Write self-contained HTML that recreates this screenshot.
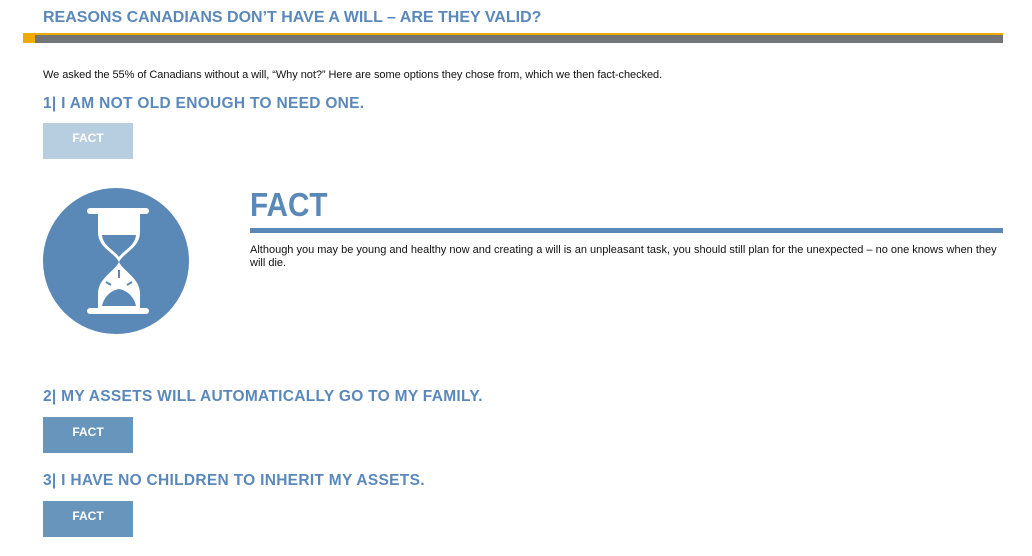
<!DOCTYPE html>
<html><head><meta charset="utf-8"><style>
*{margin:0;padding:0;box-sizing:border-box}
body{width:1032px;height:556px;background:#fff;font-family:"Liberation Sans",Arial,sans-serif;position:relative;overflow:hidden}
.a{position:absolute;white-space:nowrap}
.h{color:#5b88bb;font-weight:bold;letter-spacing:0.2px}
.btn{position:absolute;left:43px;width:90px;height:36px;color:#fff;font-weight:bold;font-size:12px;text-align:center;line-height:31px}
.p{font-size:11px;color:#111}
</style></head><body>
<div class="a h" style="left:43px;top:9px;font-size:16px;letter-spacing:0">REASONS CANADIANS DON’T HAVE A WILL – ARE THEY VALID?</div>
<div class="a" style="left:23px;top:33px;width:980px;height:2px;background:#f0ab00"></div>
<div class="a" style="left:35px;top:35px;width:968px;height:8px;background:#737477"></div>
<div class="a" style="left:23px;top:33px;width:12px;height:10px;background:#f0ab00"></div>
<div class="a p" style="left:43px;top:69px;letter-spacing:-0.05px">We asked the 55% of Canadians without a will, “Why not?” Here are some options they chose from, which we then fact-checked.</div>
<div class="a h" style="left:43px;top:95px;font-size:15.5px;letter-spacing:0.3px">1| I AM NOT OLD ENOUGH TO NEED ONE.</div>
<div class="btn" style="top:123px;background:#b7cde0">FACT</div>
<svg class="a" style="left:0;top:0" width="260" height="360" viewBox="0 0 260 360">
<circle cx="116" cy="261" r="73" fill="#5a89b7"/>
<rect x="87" y="208" width="62" height="6" rx="3" fill="#fff"/>
<rect x="87" y="308" width="62" height="6" rx="3" fill="#fff"/>
<path d="M98,214 L140,214 L140,232 C140,248 124,252 119,262 C124,272 140,278 140,294 L140,309 L98,309 L98,294 C98,278 114,272 119,262 C114,252 98,248 98,232 Z" fill="#fff"/>
<path d="M102,235 L136,235 C135,246 124,250 119,257 C114,250 103,246 102,235 Z" fill="#5a89b7"/>
<path d="M102,306 C104,296 112,290 119,289 C126,290 134,296 136,306 Z" fill="#5a89b7"/>
<path d="M119,270 L119,278 M106,282 L111,285 M132,282 L127,285" stroke="#5a89b7" stroke-width="2" fill="none"/>
</svg>
<div class="a" style="left:250px;top:186px;font-size:33px;font-weight:bold;color:#5a89b7;transform:scaleX(0.9);transform-origin:0 0">FACT</div>
<div class="a" style="left:250px;top:228px;width:753px;height:5px;background:#5a89b7"></div>
<div class="a p" style="left:250px;top:244px;line-height:13px;white-space:normal;width:750px">Although you may be young and healthy now and creating a will is an unpleasant task, you should still plan for the unexpected – no one knows when they will die.</div>
<div class="a h" style="left:43px;top:388px;font-size:15.5px;letter-spacing:0.3px">2| MY ASSETS WILL AUTOMATICALLY GO TO MY FAMILY.</div>
<div class="btn" style="top:417px;background:#6895bb">FACT</div>
<div class="a h" style="left:43px;top:472px;font-size:15.5px;letter-spacing:0.3px">3| I HAVE NO CHILDREN TO INHERIT MY ASSETS.</div>
<div class="btn" style="top:501px;background:#6895bb">FACT</div>
</body></html>
